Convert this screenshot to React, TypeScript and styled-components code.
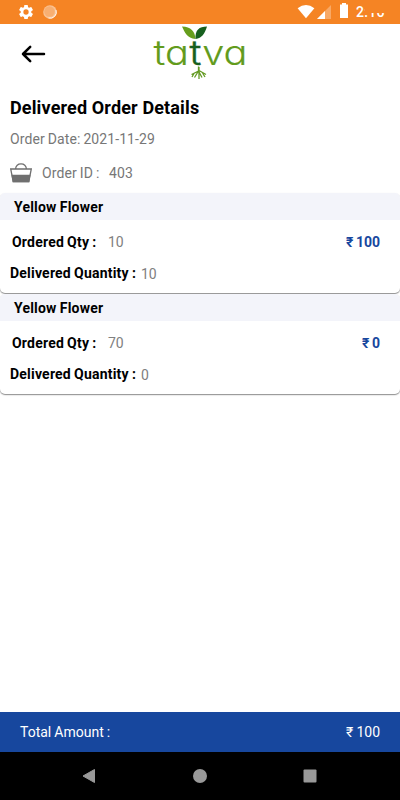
import React from "react";
import styled, { createGlobalStyle } from "styled-components";

const GlobalStyle = createGlobalStyle`
  * { box-sizing: border-box; }
  body { margin: 0; background: #fff; font-family: Roboto, "Noto Sans", sans-serif; }
`;

const Screen = styled.div`
  width: 400px;
  height: 800px;
  display: flex;
  flex-direction: column;
  overflow: hidden;
  background: #fff;
`;

const StatusBar = styled.header`
  position: relative;
  height: 24px;
  flex: none;
  display: flex;
  justify-content: space-between;
  background: #f58424;
`;

const Clock = styled.span`
  position: absolute;
  left: 356px;
  top: 3px;
  font-size: 14px;
  line-height: 18px;
  font-weight: 500;
  letter-spacing: 0.3px;
  color: #fff;
  clip-path: polygon(0 0, 9px 0, 9px 10px, 40px 10px, 40px 100%, 0 100%);
`;

const AppBar = styled.nav`
  height: 60px;
  flex: none;
  display: grid;
  grid-template-columns: 153px 96px 1fr;
`;

const BackButton = styled.button`
  display: flex;
  align-items: flex-start;
  padding: 20px 0 0 21px;
  border: 0;
  background: none;
`;

const Wordmark = styled.text`
  font-family: Inter, sans-serif;
  font-size: 34px;
  font-weight: 300;
  font-feature-settings: "cv11" 1;
`;

const Main = styled.main`
  flex: 1;
  min-height: 0;
`;

const Heading = styled.section`
  height: 109px;
  padding: 12px 10px 0;
`;

const Title = styled.h1`
  margin: 0;
  font-size: 18px;
  line-height: 24px;
  font-weight: 700;
  letter-spacing: 0.14px;
  color: #000;
`;

const Meta = styled.div<{ $gap: number }>`
  display: flex;
  align-items: center;
  height: 22px;
  margin-top: ${(p) => p.$gap}px;
  font-size: 14px;
  letter-spacing: 0.08px;
  word-spacing: -0.5px;
  color: #777;
  white-space: pre;
`;

const OrderLabel = styled.span`
  margin: 0 9.6px 0 10px;
`;

const Card = styled.article`
  height: 100px;
  margin-bottom: 1px;
  border-radius: 5px;
  background: #fff;
  overflow: hidden;
  box-shadow: 0 1px 1px rgba(0, 0, 0, 0.35), 0 1px 2px rgba(0, 0, 0, 0.15);
`;

const CardTitle = styled.h2`
  margin: 0;
  height: 27px;
  padding: 1px 14px 0;
  font-size: 14px;
  line-height: 27px;
  font-weight: 700;
  letter-spacing: 0.2px;
  word-spacing: -0.5px;
  background: #f3f4fa;
`;

const Row = styled.div<{ $left: number; $top: number }>`
  display: flex;
  height: 20px;
  margin-top: ${(p) => p.$top}px;
  padding: 0 20px 0 ${(p) => p.$left}px;
  font-size: 14px;
  line-height: 20px;
`;

const Label = styled.span<{ $width: number }>`
  width: ${(p) => p.$width}px;
  font-weight: 700;
  letter-spacing: 0.21px;
  word-spacing: -0.6px;
  white-space: nowrap;
`;

const Value = styled.span<{ $drop?: number }>`
  padding-top: ${(p) => p.$drop ?? 0}px;
  color: #808080;
`;

const Price = styled.span`
  margin-left: auto;
  font-weight: 700;
  word-spacing: -1px;
  color: #17479e;
`;

const TotalBar = styled.footer`
  height: 40px;
  flex: none;
  display: flex;
  align-items: center;
  justify-content: space-between;
  padding: 0 20px;
  font-size: 14px;
  word-spacing: -0.4px;
  color: #fff;
  background: #17479e;
`;

const SystemNav = styled.div`
  height: 48px;
  flex: none;
  display: flex;
  justify-content: center;
  gap: 86px;
  padding-top: 12px;
  background: #000;
`;

const items = [
  { name: "Yellow Flower", ordered: 10, delivered: 10, price: 100 },
  { name: "Yellow Flower", ordered: 70, delivered: 0, price: 0 },
];

const Notifications = () => (
  <svg width="80" height="24" viewBox="0 0 80 24">
    <g transform="translate(17.2 3.2) scale(.735)">
      <path fill="#fff" d="M19.14 12.94c.04-.3.06-.61.06-.94s-.02-.64-.07-.94l2.03-1.58a.49.49 0 0 0 .12-.61l-1.92-3.32a.488.488 0 0 0-.59-.22l-2.39.96c-.5-.38-1.03-.7-1.62-.94l-.36-2.54a.484.484 0 0 0-.48-.41h-3.84c-.24 0-.43.17-.47.41l-.36 2.54c-.59.24-1.13.57-1.62.94l-2.39-.96c-.22-.08-.47 0-.59.22L2.74 8.87c-.12.21-.08.47.12.61l2.03 1.58c-.05.3-.09.63-.09.94s.02.64.07.94l-2.03 1.58a.49.49 0 0 0-.12.61l1.92 3.32c.12.22.37.29.59.22l2.39-.96c.5.38 1.03.7 1.62.94l.36 2.54c.05.24.24.41.48.41h3.84c.24 0 .44-.17.47-.41l.36-2.54c.59-.24 1.13-.56 1.62-.94l2.39.96c.22.08.47 0 .59-.22l1.92-3.32a.49.49 0 0 0-.12-.61l-2.01-1.58zM12 15.6A3.6 3.6 0 1 1 12 8.4a3.6 3.6 0 0 1 0 7.2z" />
    </g>
    <circle cx="50" cy="12" r="6.8" fill="#fff" fillOpacity=".5" />
    <circle cx="49.5" cy="11.5" r="5.2" fill="#f58424" fillOpacity=".3" />
    <path d="M56 10a6.2 6.2 0 0 1-7.5 8" fill="none" stroke="#fff" strokeOpacity=".85" strokeWidth="1" />
  </svg>
);

const Signals = () => (
  <svg width="105" height="24" viewBox="295 0 105 24">
    <path fill="#fff" d="M297.6 8.2Q306 1.8 314.4 8.2L306 18.3Z" />
    <path fill="#fff" fillOpacity=".3" d="M331 5V19H317Z" />
    <path fill="#fff" d="M325 11V19H317Z" />
    <path fill="#fff" d="M340 4.5h2V3h4v1.5h2V18h-8z" />
  </svg>
);

const Logo = () => (
  <svg width="96" height="60" viewBox="153 24 96 60" role="img" aria-label="tatva">
    <Wordmark x="153.5" y="64.5" textLength="94" lengthAdjust="spacingAndGlyphs" fill="#629b1c" stroke="#629b1c" strokeWidth=".15">
      ta<tspan fill="#17601f" stroke="#17601f" strokeWidth=".4" dx=".6">t</tspan>va
    </Wordmark>
    <path fill="#669e1d" d="M195.500 39C187 38 185 33 182 26.500C191 27 195 31 195.500 39Z" />
    <path fill="#17601f" d="M195.500 39C195 30 199 26.500 207 26.500C204.500 34 202 38 195.500 39Z" />
    <path d="M198.500 66.500V71L191.500 74.500M198.500 71L194.500 77.500M198.500 71L202 77.500M199 70.500L206 74.500M199 67V79M194 73.500L192 77M202.500 73L205 77" fill="none" stroke="#649b24" strokeWidth="1.3" />
  </svg>
);

const Basket = () => (
  <svg width="22" height="20" viewBox="0 0 22 20" fill="none" stroke="#6f6f6f" strokeWidth="1.3">
    <path d="M.7 6H21.3L18.8 18.5H3.2ZM5.5 6C6 2.3 8 .8 11 .8s5 1.5 5.5 5.2" />
    <path d="M2.2 12.5H19.8L18.7 18.5H3.3Z" fill="#6f6f6f" />
  </svg>
);

export default function App() {
  return (
    <>
      <GlobalStyle />
      <Screen>
        <StatusBar>
          <Notifications />
          <Signals />
          <Clock>2:16</Clock>
        </StatusBar>
        <AppBar>
          <BackButton aria-label="Back">
            <svg width="25" height="20" viewBox="0 0 25 20" fill="none" stroke="#000" strokeWidth="2.5" strokeLinecap="round" strokeLinejoin="round">
              <path d="M23 10H2M9.200 2.800L2 10l7.200 7.200" />
            </svg>
          </BackButton>
          <Logo />
        </AppBar>
        <Main>
          <Heading>
            <Title>Delivered Order Details</Title>
            <Meta $gap={8}>Order Date: 2021-11-29</Meta>
            <Meta $gap={12}>
              <Basket />
              <OrderLabel>Order ID :</OrderLabel>
              <span>403</span>
            </Meta>
          </Heading>
          {items.map((item, i) => (
            <Card key={i}>
              <CardTitle>{item.name}</CardTitle>
              <Row $left={12} $top={12}>
                <Label $width={96}>Ordered Qty :</Label>
                <Value>{item.ordered}</Value>
                <Price>₹ {item.price}</Price>
              </Row>
              <Row $left={10} $top={11}>
                <Label $width={131}>Delivered Quantity :</Label>
                <Value $drop={1}>{item.delivered}</Value>
              </Row>
            </Card>
          ))}
        </Main>
        <TotalBar>
          <span>Total Amount :</span>
          <span>₹ 100</span>
        </TotalBar>
        <SystemNav>
          <svg width="24" height="24" viewBox="0 0 24 24"><path d="M16.5 5.5V18.5L5 12Z" fill="#999" stroke="#999" strokeWidth="1" strokeLinejoin="round" /></svg>
          <svg width="24" height="24" viewBox="0 0 24 24"><circle cx="12" cy="12" r="7" fill="#999" /></svg>
          <svg width="24" height="24" viewBox="0 0 24 24"><rect x="5.5" y="5.5" width="13" height="13" rx="1" fill="#999" /></svg>
        </SystemNav>
      </Screen>
    </>
  );
}
